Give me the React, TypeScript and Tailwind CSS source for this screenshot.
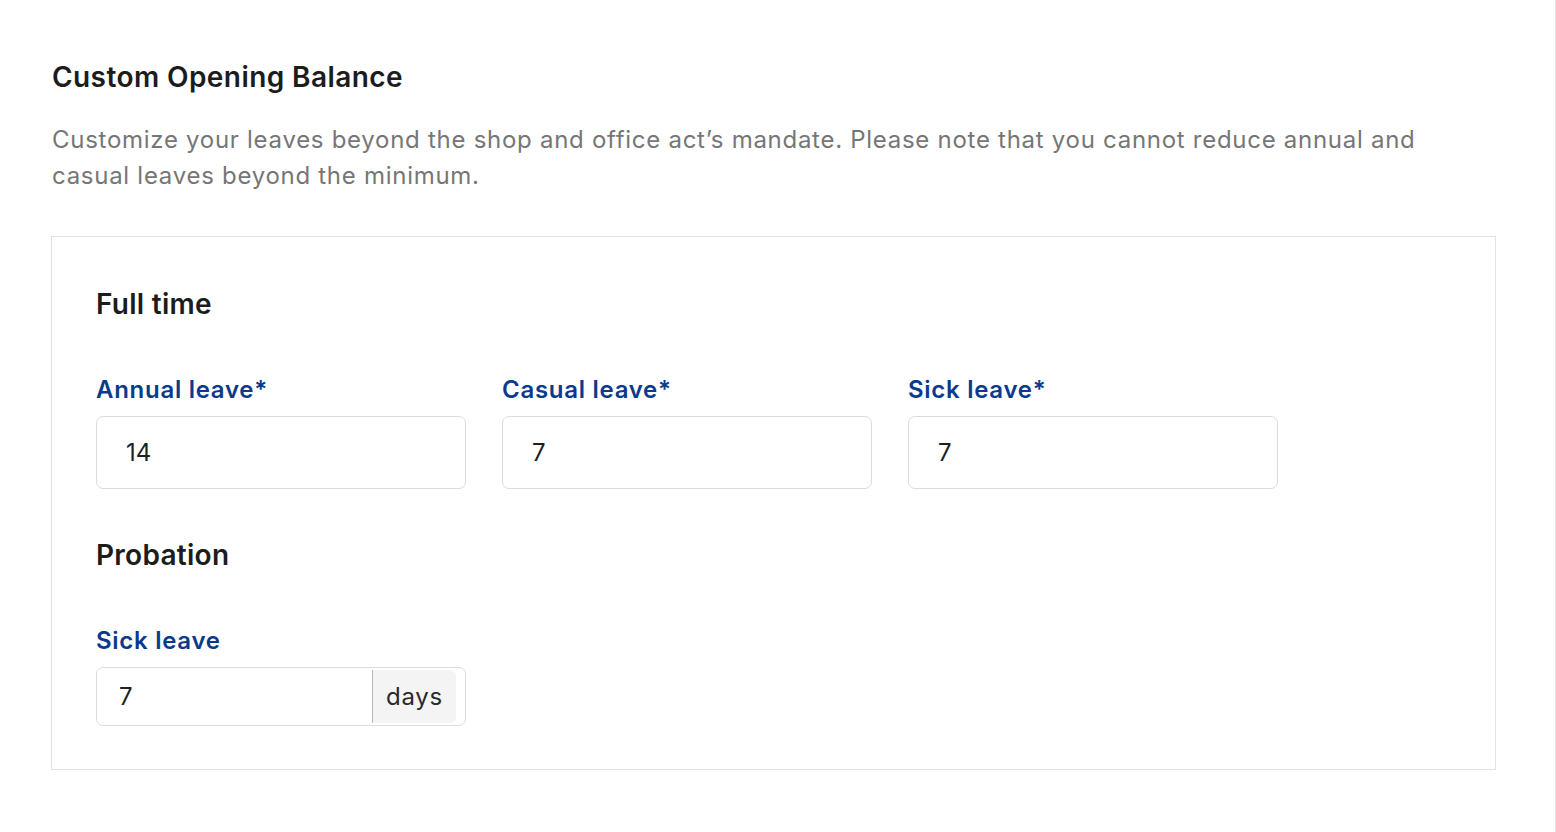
const LABEL = 'text-[24px] font-semibold text-[#0a3a8c] leading-[30px] tracking-[0.03em]';

function Field({ label, value }: { label: string; value: string }) {
  return (
    <div className="flex flex-col gap-[11px]">
      <label className={LABEL}>{label}</label>
      <div className="h-[73px] rounded-[7px] border border-[#dcdcdc] bg-white flex items-center pl-[29px] text-[24px] text-[#1f1f1f]">
        {value}
      </div>
    </div>
  );
}

export default function App() {
  return (
    <div
      className="min-h-[832px] w-[1556px] bg-white flex"
      style={{ fontFamily: 'Inter, "Noto Sans", sans-serif' }}
    >
      <div className="flex-1 pl-[51px] pr-[59px] pt-[58px] border-r border-[#e3e3e3]">
        <h1 className="ml-[1px] text-[28px] font-semibold text-[#1c1c1c] leading-[38px] tracking-[0.015em]">Custom Opening Balance</h1>
        <p className="ml-[1px] mt-[26px] text-[24px] leading-[36px] text-[#767676] tracking-[0.03em] max-w-[1400px]">
          Customize your leaves beyond the shop and office act’s mandate. Please note that you cannot reduce annual and casual leaves beyond the minimum.
        </p>

        <div className="mt-[42px] border border-[#e2e2e2] pl-[44px] pt-[48px] pb-[43px]">
          <h2 className="text-[28px] font-semibold text-[#1c1c1c] leading-[38px] tracking-[0.01em]">Full time</h2>
          <div className="mt-[52px] grid grid-cols-[370px_370px_370px] gap-x-[36px]">
            <Field label="Annual leave*" value="14" />
            <Field label="Casual leave*" value="7" />
            <Field label="Sick leave*" value="7" />
          </div>

          <h2 className="mt-[47px] text-[28px] font-semibold text-[#1c1c1c] leading-[38px] tracking-[0.01em]">Probation</h2>
          <div className="mt-[52px] w-[370px] flex flex-col gap-[11px]">
            <label className={LABEL}>Sick leave</label>
            <div className="h-[59px] rounded-[7px] border border-[#dcdcdc] bg-white flex items-stretch py-[2px] pr-[9px]">
              <div className="flex-1 flex items-center pl-[22px] text-[24px] text-[#1f1f1f]">7</div>
              <div className="w-[84px] flex items-center justify-center border-l border-[#b8b8b8] bg-[#f4f4f4] rounded-r-[6px] text-[24px] text-[#2a2a2a] tracking-[0.03em]">
                days
              </div>
            </div>
          </div>
        </div>
      </div>
    </div>
  );
}
